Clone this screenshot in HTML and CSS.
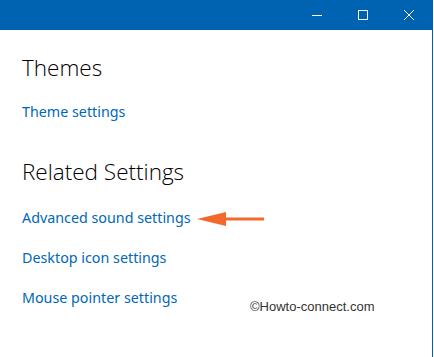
FILE: index.html
```html
<!DOCTYPE html>
<html lang="en">
<head>
    <meta charset="UTF-8">
    <title>Settings</title>
    <link rel="stylesheet" href="styles.css">
</head>
<body>
    <div class="window">
        <div class="title-bar">
            <button class="cap-btn">
                <svg width="10" height="10" viewBox="0 0 10 10"><path d="M0 5.5h10" stroke="#fff" stroke-width="1"/></svg>
            </button>
            <button class="cap-btn">
                <svg width="10" height="10" viewBox="0 0 10 10"><rect x="0.5" y="0.5" width="9" height="9" fill="none" stroke="#fff" stroke-width="1"/></svg>
            </button>
            <button class="cap-btn">
                <svg width="10" height="10" viewBox="0 0 10 10"><path d="M0 0L10 10M10 0L0 10" stroke="#fff" stroke-width="1"/></svg>
            </button>
        </div>
        <div class="content">
            <h2 class="group-title">Themes</h2>
            <a class="link" href="#">Theme settings</a>

            <h2 class="group-title related">Related Settings</h2>
            <div class="link-row">
                <a class="link" href="#">Advanced sound settings</a>
                <svg class="arrow" width="68" height="16" viewBox="0 0 68 16">
                    <path d="M0 8L29 1V15Z" fill="#f26a2b"/>
                    <path d="M27 8H67" stroke="#f26a2b" stroke-width="3"/>
                </svg>
            </div>
            <a class="link" href="#">Desktop icon settings</a>
            <a class="link" href="#">Mouse pointer settings</a>
        </div>
        <div class="watermark">©Howto-connect.com</div>
    </div>
</body>
</html>
```

FILE: styles.css
```css
*{
    margin: 0;
    padding: 0;
    box-sizing: border-box;
}
body{
    background: #fff;
    font-family: "Noto Sans", "Open Sans", sans-serif;
}
.window{
    width: 433px;
    height: 357px;
    border-right: 1px solid #0063b1;
    position: relative;
    background: #fff;
}
.title-bar{
    height: 30px;
    background: #0063b1;
    display: flex;
    justify-content: flex-end;
}
.cap-btn{
    width: 46px;
    height: 30px;
    border: none;
    background: none;
    display: flex;
    align-items: center;
    justify-content: center;
}
.content{
    padding: 24px 0 0 22px;
}
.group-title{
    font-family: "Open Sans", sans-serif;
    font-weight: 300;
    font-size: 22.5px;
    line-height: 28px;
    color: #000;
}
.group-title.related{
    margin-top: 36px;
}
.link{
    display: block;
    font-size: 14.3px;
    line-height: 20px;
    color: #0067b8;
    text-decoration: none;
    margin-top: 20px;
}
.related + .link-row .link{
    margin-top: 22px;
}
.link-row{
    display: flex;
    align-items: flex-end;
}
.link-row .link{
    display: inline-block;
}
.arrow{
    margin-left: 6px;
    margin-bottom: 1px;
}
.watermark{
    position: absolute;
    left: 250px;
    top: 299px;
    font-family: "Liberation Sans", sans-serif;
    font-size: 13px;
    color: #333;
}
```
